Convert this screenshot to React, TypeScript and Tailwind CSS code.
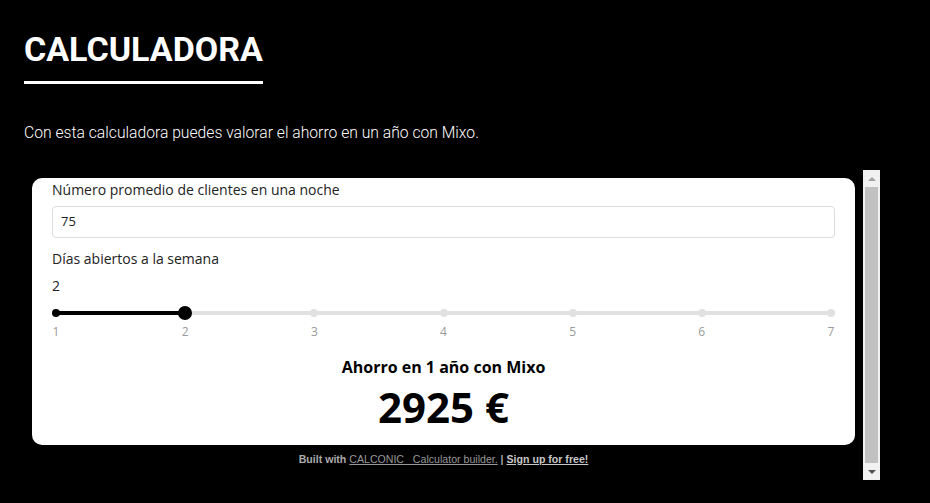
const steps = [1, 2, 3, 4, 5, 6, 7];

function DaySlider({ value }: { value: number }) {
  const pct = ((value - 1) / (steps.length - 1)) * 100;
  return (
    <div className="mt-[11px]">
      <div className="relative h-[14px] mx-[4px]">
        <div className="absolute left-0 right-0 top-[5px] h-[4px] rounded-full bg-[#e1e1e1]" />
        <div className="absolute left-0 top-[5px] h-[4px] bg-black" style={{ width: `${pct}%` }} />
        {steps.map((s, i) => (
          <div
            key={s}
            className={`absolute top-[3px] w-[8px] h-[8px] -ml-[4px] rounded-full ${s <= value ? 'bg-black' : 'bg-[#e1e1e1]'}`}
            style={{ left: `${(i / (steps.length - 1)) * 100}%` }}
          />
        ))}
        <div className="absolute top-0 w-[14px] h-[14px] -ml-[7px] rounded-full bg-black" style={{ left: `${pct}%` }} />
      </div>
      <div className="flex justify-between mt-[6px] text-[12px] text-[#999] leading-none">
        {steps.map((s) => (
          <span key={s} className="w-[8px] text-center">{s}</span>
        ))}
      </div>
    </div>
  );
}

export default function App() {
  return (
    <div className="min-h-screen bg-black font-['Roboto',sans-serif]">
      <div className="pl-[24px] pt-[29px]">
        <h1 className="inline-block text-white text-[34px] font-bold leading-[40px] pb-[12px] border-b-[3px] border-white">
          CALCULADORA
        </h1>
        <p className="mt-[39px] text-white text-[15.7px] font-light leading-[20px]">
          Con esta calculadora puedes valorar el ahorro en un año con Mixo.
        </p>
      </div>

      {/* embedded calculator frame */}
      <div className="ml-[32px] mt-[27px] w-[848px] h-[310px] flex">
        <div className="flex-1 flex flex-col font-['Open_Sans',sans-serif]">
          <div className="mt-[8px] mr-[8px] bg-white rounded-[10px] h-[267px] px-[20px] pt-[2px] text-[#222]">
            <div className="text-[14px] leading-[19px]">Número promedio de clientes en una noche</div>
            <div className="mt-[7px] h-[32px] border border-[#dddddd] rounded-[4px] px-[8px] flex items-center text-[13px]">
              75
            </div>
            <div className="mt-[11px] text-[14px] leading-[19px]">Días abiertos a la semana</div>
            <div className="mt-[8px] text-[14px] leading-[19px]">2</div>
            <DaySlider value={2} />
            <div className="mt-[18px] text-center text-[16px] font-bold leading-[22px] text-black">
              Ahorro en 1 año con Mixo
            </div>
            <div className="mt-[3px] text-center text-[42px] font-bold leading-[52px] text-black">2925 €</div>
          </div>
          <div className="mt-[7px] mr-[8px] text-center text-[10.6px] font-['Liberation_Sans',sans-serif] text-[#aaa]">
            <span className="font-bold">Built with </span>
            <span className="underline text-[#999]">CALCONIC_ Calculator builder.</span>
            <span className="font-bold"> | </span>
            <span className="font-bold underline text-[#c8c8c8]">Sign up for free!</span>
          </div>
        </div>
        <div className="w-[17px] bg-[#f1f1f1] flex flex-col items-center">
          <div className="h-[17px] flex items-center justify-center">
            <div className="w-0 h-0 border-l-[4px] border-r-[4px] border-b-[4px] border-l-transparent border-r-transparent border-b-[#a3a3a3]" />
          </div>
          <div className="flex-1 w-[13px] bg-[#c1c1c1]" />
          <div className="h-[17px] flex items-center justify-center">
            <div className="w-0 h-0 border-l-[4px] border-r-[4px] border-t-[4px] border-l-transparent border-r-transparent border-t-[#505050]" />
          </div>
        </div>
      </div>
    </div>
  );
}
